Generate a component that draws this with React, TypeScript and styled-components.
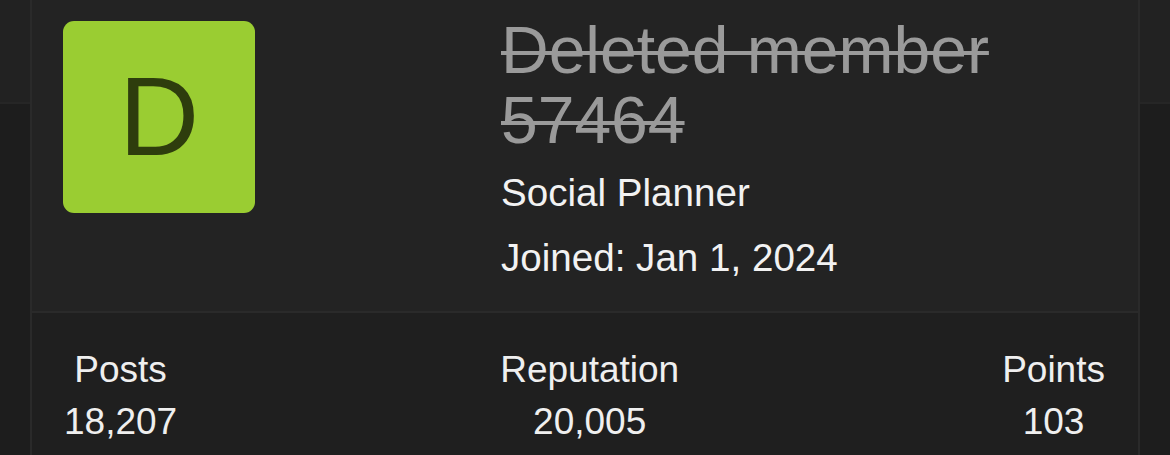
import React from "react";
import styled, { createGlobalStyle } from "styled-components";

const Global = createGlobalStyle`
  html, body { margin: 0; padding: 0; background: #1d1d1d; }
  body { font-family: "Liberation Sans", Arial, Helvetica, sans-serif; }
`;

const Page = styled.div`
  display: flex;
  width: 1170px;
  height: 455px;
  overflow: hidden;
  background: #1d1d1d;
`;

const Gutter = styled.div`
  width: 30px;
  flex: none;
  display: flex;
  flex-direction: column;
`;

const GutterTop = styled.div`
  height: 102px;
  background: #222222;
  border-bottom: 2px solid #262626;
`;

const GutterRest = styled.div`
  flex: 1;
  background: #1d1d1d;
`;

const Card = styled.div`
  flex: 1;
  display: flex;
  flex-direction: column;
  border-left: 2px solid #2a2a2a;
  border-right: 2px solid #2a2a2a;
`;

const Header = styled.div`
  height: 313px;
  box-sizing: border-box;
  display: flex;
  gap: 246px;
  padding: 21px 31px 0;
  background: #232323;
  border-bottom: 2px solid #2a2a2a;
`;

const Avatar = styled.div`
  width: 192px;
  height: 192px;
  flex: none;
  border-radius: 11px;
  background: #9acd32;
  color: #2e3d0d;
  display: flex;
  align-items: center;
  justify-content: center;
  font-size: 111px;
  line-height: 1;
`;

const Info = styled.div`
  display: flex;
  flex-direction: column;
  margin-top: -6px;
`;

const Name = styled.div`
  width: 500px;
  font-size: 66px;
  line-height: 70px;
  color: #9a9a9a;
  text-decoration: line-through;
  text-decoration-thickness: 4px;
  margin-bottom: 5px;
`;

const Meta = styled.div`
  font-size: 38.6px;
  line-height: 65px;
  color: #f2f2f2;
`;

const Stats = styled.div`
  flex: 1;
  display: flex;
  justify-content: space-between;
  padding: 31px 33px 0 32px;
  background: #1f1f1f;
`;

const Stat = styled.div`
  display: flex;
  flex-direction: column;
  align-items: center;
  font-size: 37px;
  line-height: 52px;
  color: #efefef;
`;

const stats = [
  { label: "Posts", value: "18,207" },
  { label: "Reputation", value: "20,005" },
  { label: "Points", value: "103" },
];

export default function App() {
  return (
    <>
      <Global />
      <Page>
        <Gutter>
          <GutterTop />
          <GutterRest />
        </Gutter>
        <Card>
          <Header>
            <Avatar>D</Avatar>
            <Info>
              <Name>Deleted member 57464</Name>
              <Meta>Social Planner</Meta>
              <Meta>Joined: Jan 1, 2024</Meta>
            </Info>
          </Header>
          <Stats>
            {stats.map((s) => (
              <Stat key={s.label}>
                <span>{s.label}</span>
                <span>{s.value}</span>
              </Stat>
            ))}
          </Stats>
        </Card>
        <Gutter>
          <GutterTop />
          <GutterRest />
        </Gutter>
      </Page>
    </>
  );
}
